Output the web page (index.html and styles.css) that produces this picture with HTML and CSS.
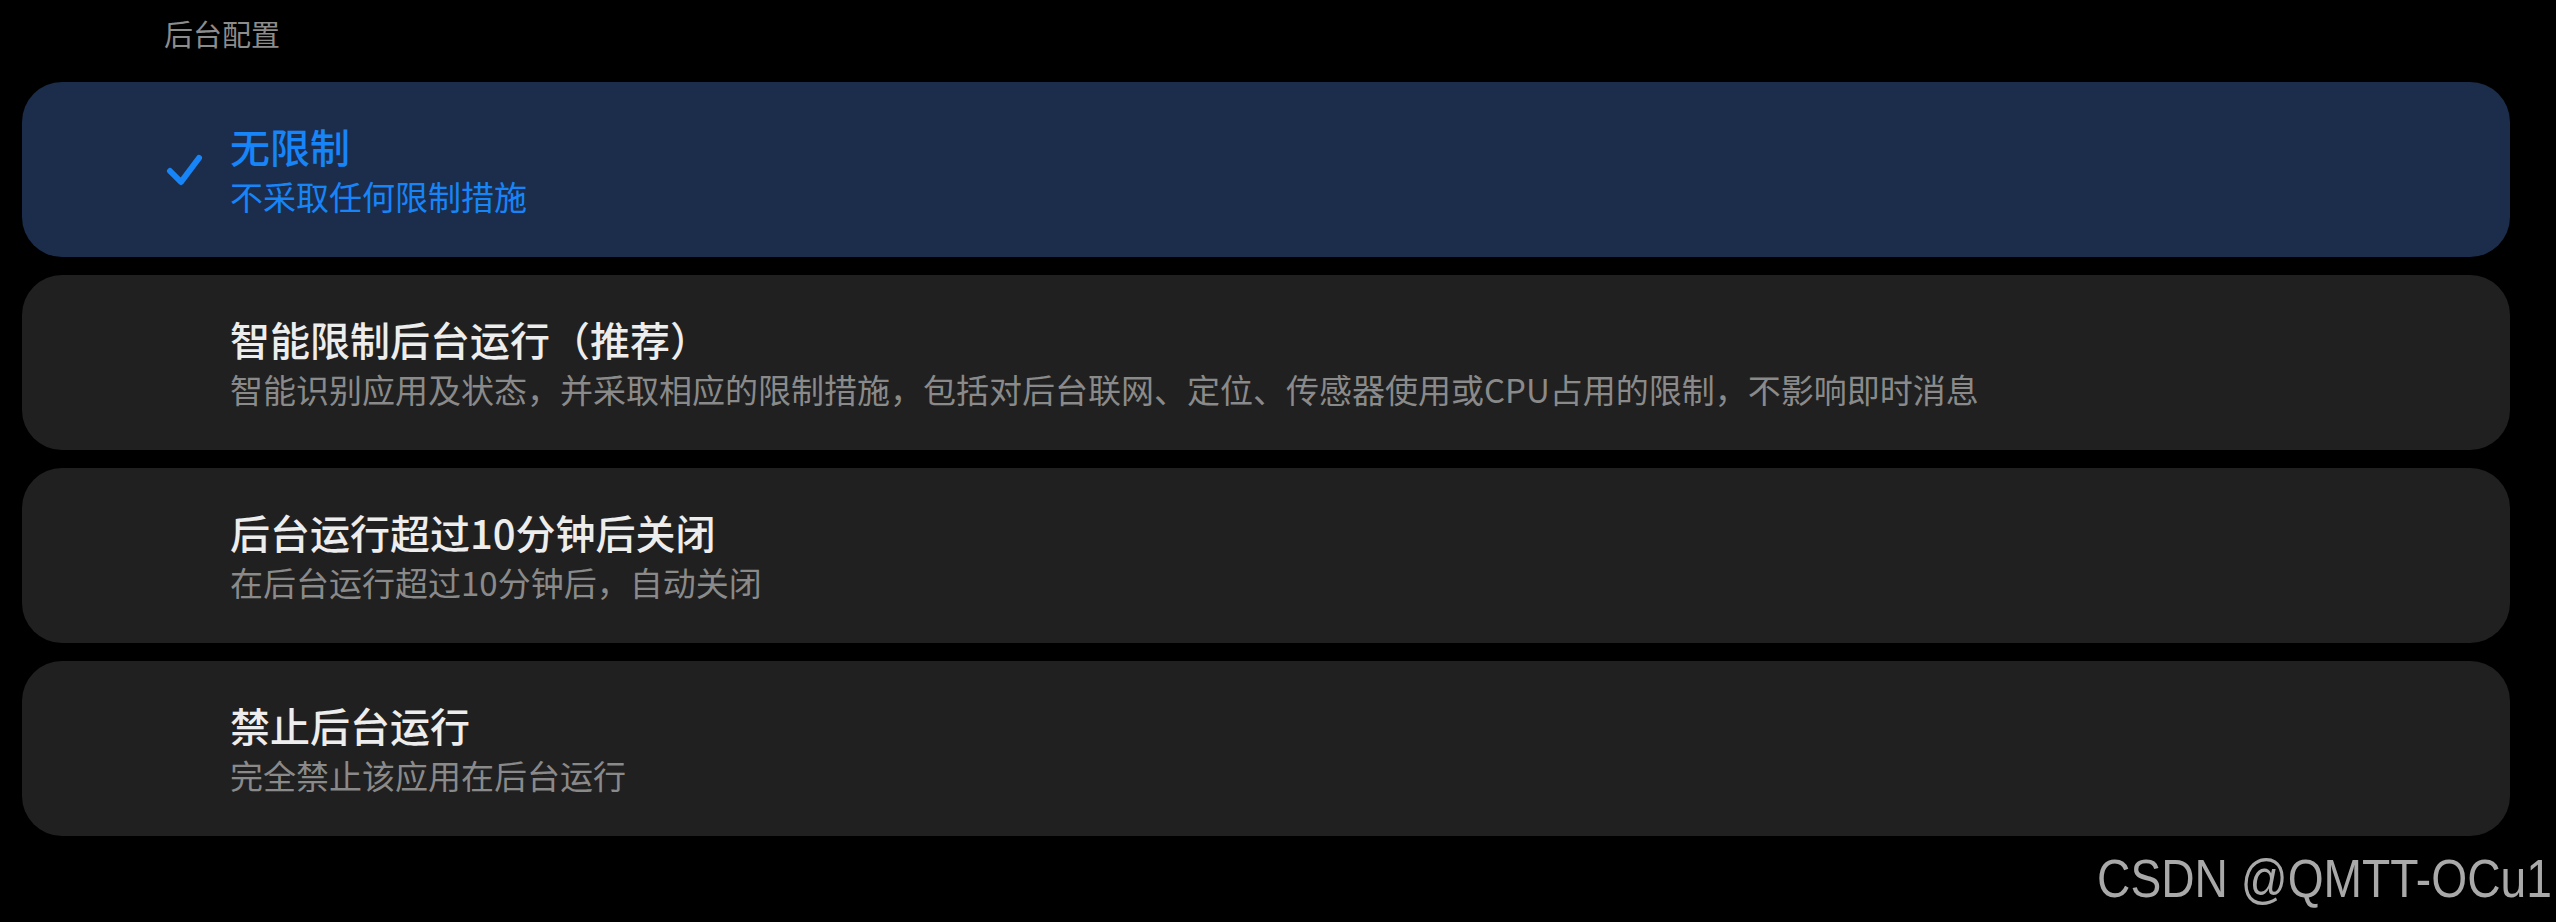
FILE: index.html
```html
<!DOCTYPE html>
<html lang="zh-CN">
<head>
<meta charset="utf-8">
<title>后台配置</title>
<link rel="stylesheet" href="styles.css">
</head>
<body>
<div class="page">
  <div class="section-title">后台配置</div>
  <div class="options">
    <div class="option selected">
      <div class="mark">
        <svg class="check" width="37" height="32" viewBox="0 0 37 32"><path d="M4 17 L15 28 L33 4" fill="none" stroke="#1784f8" stroke-width="6" stroke-linecap="round" stroke-linejoin="round"/></svg>
      </div>
      <div class="texts">
        <div class="title">无限制</div>
        <div class="desc">不采取任何限制措施</div>
      </div>
    </div>
    <div class="option">
      <div class="mark"></div>
      <div class="texts">
        <div class="title">智能限制后台运行（推荐）</div>
        <div class="desc">智能识别应用及状态，并采取相应的限制措施，包括对后台联网、定位、传感器使用或CPU占用的限制，不影响即时消息</div>
      </div>
    </div>
    <div class="option">
      <div class="mark"></div>
      <div class="texts">
        <div class="title">后台运行超过10分钟后关闭</div>
        <div class="desc">在后台运行超过10分钟后，自动关闭</div>
      </div>
    </div>
    <div class="option">
      <div class="mark"></div>
      <div class="texts">
        <div class="title">禁止后台运行</div>
        <div class="desc">完全禁止该应用在后台运行</div>
      </div>
    </div>
  </div>
  <div class="watermark"><span class="wm-text">CSDN @QMTT-OCu1</span></div>
</div>
</body>
</html>
```
FILE: styles.css
```css
html, body {
  margin: 0;
  padding: 0;
  background: #000;
}
body {
  font-family: "Noto Sans CJK SC", "Noto Sans", sans-serif;
  overflow: hidden;
}
.page {
  display: flex;
  flex-direction: column;
  padding: 13px 46px 0 22px;
}
.section-title {
  font-size: 29px;
  line-height: 40px;
  color: #8c8c8c;
  padding-left: 142px;
  margin-bottom: 29px;
}
.options {
  display: flex;
  flex-direction: column;
  gap: 18px;
}
.option {
  height: 175px;
  border-radius: 40px;
  background: #202020;
  display: flex;
  align-items: center;
  padding-left: 144px;
  box-sizing: border-box;
}
.option.selected {
  background: #1b2d4b;
}
.mark {
  width: 64px;
  flex: none;
  display: flex;
  align-items: center;
}
.check {
  display: block;
}
.texts {
  display: flex;
  flex-direction: column;
}
.title {
  font-size: 40px;
  line-height: 52px;
  font-weight: 500;
  color: #ededed;
  white-space: nowrap;
}
.desc {
  font-size: 33px;
  line-height: 48px;
  color: #8a8a8a;
  white-space: nowrap;
}
.selected .title,
.selected .desc {
  color: #1784f8;
}
.watermark {
  margin-top: 11px;
  margin-right: -42px;
  text-align: right;
  font-family: "Liberation Sans", Arial, sans-serif;
  font-size: 54px;
  line-height: 62px;
  color: #a9a9a9;
  white-space: nowrap;
}
.wm-text {
  display: inline-block;
  transform: scaleX(0.855);
  transform-origin: right center;
}
```
